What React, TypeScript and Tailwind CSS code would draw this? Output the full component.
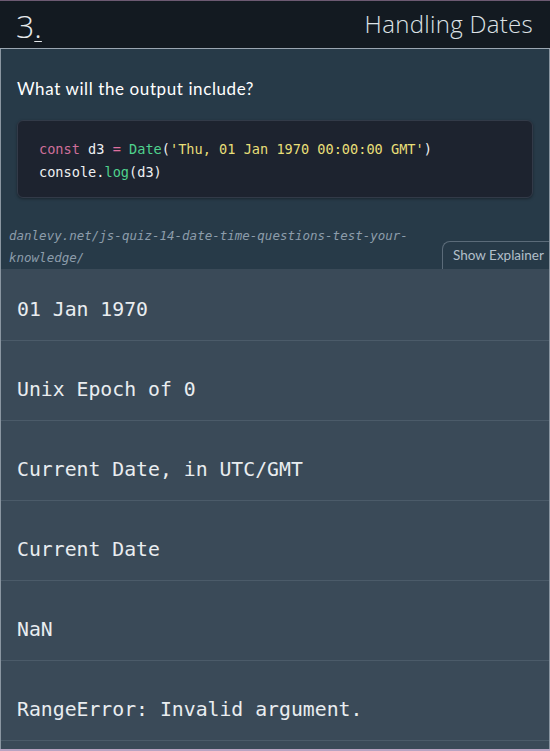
import React from "react";

const answers = [
  "01 Jan 1970",
  "Unix Epoch of 0",
  "Current Date, in UTC/GMT",
  "Current Date",
  "NaN",
  "RangeError: Invalid argument.",
];

export default function App() {
  const mono = { fontFamily: '"DejaVu Sans Mono", monospace' };
  return (
    <div className="w-[550px] h-[751px] overflow-hidden bg-[#273a48] flex flex-col border-t border-t-[#6c5a72] border-b-2 border-b-[#b9a3c2]">
      <header
        className="h-[48px] shrink-0 bg-[#131a21] border-b border-b-[#9aa6b1] flex items-center justify-between pl-[16px] pr-[17px]"
        style={{ fontFamily: '"Open Sans", Lato, sans-serif' }}
      >
        <div className="text-[32px] font-light text-[#e6e9ec] leading-none pt-[2px]">
          3<span className="underline decoration-1 underline-offset-[3px]">.</span>
        </div>
        <div className="text-[24px] font-light text-[#dde2e6] leading-none -mt-[2px] tracking-[0.3px]">Handling Dates</div>
      </header>
      <div className="flex-1 flex flex-col border-x border-x-[#8a96a1]">
        <div className="pt-[30px] pl-[16px] text-[17px] tracking-[0.6px] text-white leading-[20px]" style={{ fontFamily: 'Lato, "Open Sans", sans-serif' }}>
          What will the output include?
        </div>
        <div className="mx-[16px] mt-[21px] h-[78px] rounded-[6px] bg-[#1d232f] border border-[#323a48] shadow-[0_1px_3px_rgba(0,0,0,0.35)] pl-[21px] pt-[17px] text-[13.6px] leading-[23px] text-[#eef0f2]" style={mono}>
          <div>
            <span className="text-[#cf6f9a]">const</span> d3 <span className="text-[#e0709f]">=</span>{" "}
            <span className="text-[#4fd18d]">Date</span>(<span className="text-[#e8df78]">'Thu, 01 Jan 1970 00:00:00 GMT'</span>)
          </div>
          <div>
            console.<span className="text-[#4fd18d]">log</span>(d3)
          </div>
        </div>
        <div className="mt-[27px] flex items-end">
          <div className="flex-1 pl-[8px] text-[12.5px] leading-[22px] italic text-[#8d9dab]" style={mono}>
            danlevy.net/js-quiz-14-date-time-questions-test-your-
            <br />
            knowledge/
          </div>
          <div className="w-[107px] h-[28px] shrink-0 rounded-tl-[8px] border-l border-t border-[#5b6b79] flex items-center pl-[10px] text-[13.5px] text-[#b2bfca]" style={{ fontFamily: 'Lato, "Open Sans", sans-serif' }}>
            Show Explainer
          </div>
        </div>
        <div className="flex-1 bg-[#3a4a58] flex flex-col" style={mono}>
          {answers.map((a, i) => (
            <div
              key={a}
              className={`${i === 0 ? "h-[72px] pt-[27px]" : "h-[80px] pt-[35px]"} border-b border-b-[#4b5b69] pl-[16px] text-[19.8px] leading-[28px] text-[#e9edf0]`}
            >
              {a}
            </div>
          ))}
        </div>
      </div>
    </div>
  );
}
